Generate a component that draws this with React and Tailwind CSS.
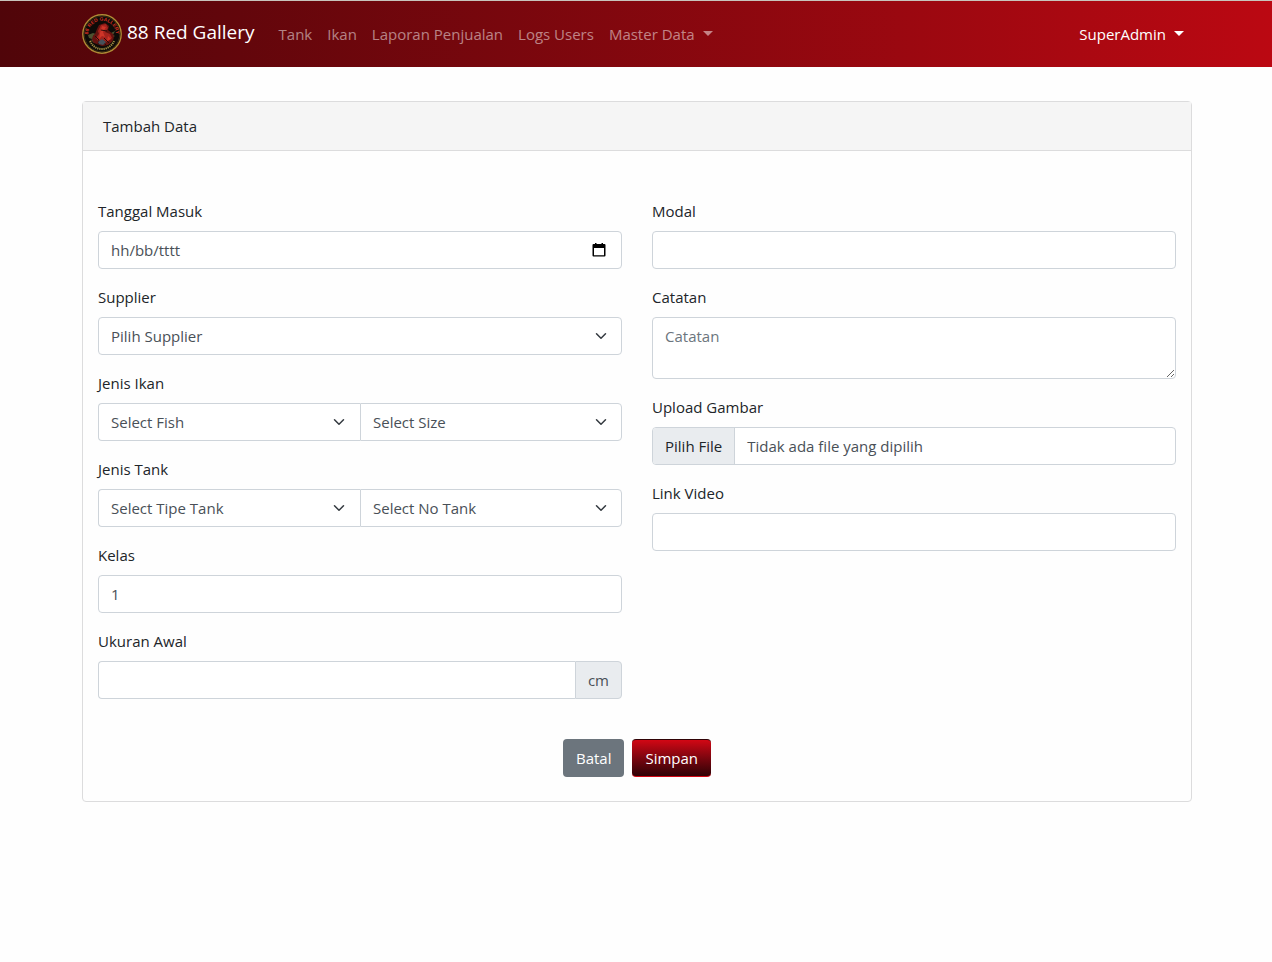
import React from "react";

const field =
  "block h-[38px] w-full min-w-0 rounded border border-[#ced4da] bg-white px-3 text-[15px] leading-6 text-[#495057] placeholder:text-[#495057] outline-none focus:border-[#86b7fe]";

function Logo() {
  return (
    <svg viewBox="0 0 40 40" className="size-10 shrink-0" aria-hidden="true">
      <defs>
        <path id="logo-top" d="M7 26a14 14 0 1 1 26 0" />
      </defs>
      <circle cx="20" cy="20" r="19.2" fill="#0d0b08" stroke="#b08a35" strokeWidth="1.4" />
      <circle cx="20" cy="20" r="17.8" fill="none" stroke="#4d3714" strokeWidth="0.7" />
      <text fill="#d02c20" fontSize="5" fontWeight="700" fontFamily="Liberation Sans, sans-serif">
        <textPath href="#logo-top" startOffset="50%" textAnchor="middle">88 RED GALLERY</textPath>
      </text>
      <path d="M6 21l5-2 3 1-3 2 3 2-4 1-3-1zM27 20l6-3-2 4 2 1-5 3zM9 26l4-2 2 3-3 2z" fill="#4d5130" />
      <path d="M12 29c-3-3-2-7 1-9l2-5 2-4 6-2 4 3-1 4 5 4c2 4 0 8-5 11l-6 1z" fill="#64120f" />
      <path d="M16 17l3-6 5-1 2 4-3 4 5 2 2 4-5 4-4-2-4 2-3-4 3-4z" fill="#a5231d" />
      <path d="M20 12l4 1-3 5 2 5-3-1-3 3 1-6zM26 22l3 3-4 2z" fill="#cf3528" />
      <path d="M13 22l4 4-1 4 5-2 3 3M19 16l6 1M22 24l5 5" fill="none" stroke="#260b0a" strokeWidth="1" />
      <path d="M16 28l4-3 4 3-3 3-4-1z" fill="#46505a" />
      <path d="M8 27c3 6 7 8 12 8s10-3 12-8" fill="none" stroke="#a99446" strokeWidth="2" strokeDasharray="1.2 0.9" />
    </svg>
  );
}

function Caret() {
  return (
    <svg viewBox="0 0 10 5" className="mb-0.5 h-[5px] w-[10px]" fill="currentColor" aria-hidden="true">
      <path d="M0 0h10L5 5z" />
    </svg>
  );
}

function Field({ label, id, children }) {
  return (
    <div>
      <label htmlFor={id} className="mb-2 block">{label}</label>
      {children}
    </div>
  );
}

function Select({ id, text, label, shape = "" }) {
  return (
    <div className="relative min-w-0 flex-1">
      <select id={id} aria-label={label} className={`${field} appearance-none pr-9 ${shape}`}>
        <option>{text}</option>
      </select>
      <svg
        viewBox="0 0 16 16"
        className="pointer-events-none absolute top-[13px] right-[15px] size-3"
        fill="none"
        stroke="#343a40"
        strokeWidth="2"
        strokeLinecap="round"
        strokeLinejoin="round"
        aria-hidden="true"
      >
        <path d="M2 5l6 6 6-6" />
      </svg>
    </div>
  );
}

export default function App() {
  return (
    <div className="min-h-screen bg-[#fefefe] font-['Open_Sans','Noto_Sans',sans-serif] text-[15px] leading-6 text-[#212529]">
      <header className="border-t border-[#c8c4bc] bg-linear-to-r from-[#500509] to-[#bb0812]">
        <nav className="mx-auto flex h-[66px] max-w-[1140px] items-center pr-[14px] pl-4">
          <a href="#" className="flex items-center gap-[5px] text-white">
            <Logo />
            <span className="pb-1 text-[19px] leading-7">88 Red Gallery</span>
          </a>
          <div className="ml-6 flex items-center gap-[15px] text-white/50">
            <a href="#">Tank</a>
            <a href="#">Ikan</a>
            <a href="#">Laporan Penjualan</a>
            <a href="#">Logs Users</a>
            <button type="button" className="flex items-center gap-2">Master Data <Caret /></button>
          </div>
          <button type="button" className="mr-2 ml-auto flex items-center gap-2 text-white">
            SuperAdmin <Caret />
          </button>
        </nav>
      </header>

      <main className="mx-auto max-w-[1140px] pt-[34px] pr-[14px] pb-8 pl-4">
        <section className="rounded border border-[#dcdcdd]">
          <h1 className="border-b border-[#dcdcdd] bg-[#f5f5f5] px-5 py-3">Tambah Data</h1>
          <form className="px-[15px] pt-12 pb-6" onSubmit={(e) => e.preventDefault()}>
            <div className="grid grid-cols-2 gap-[30px]">
              <div className="flex flex-col gap-4">
                <Field label="Tanggal Masuk" id="tanggal">
                  <div className="relative">
                    <input id="tanggal" type="text" placeholder="hh/bb/tttt" className={field} />
                    <button type="button" aria-label="Tanggal" className="absolute top-3 right-[15px]">
                      <svg viewBox="0 0 16 16" className="size-4" aria-hidden="true">
                        <path d="M4 0h1.500v1h5V0H12v1h1.500q1 0 1 1V12.500q0 1-1 1h-11q-1 0-1-1V2q0-1 1-1H4zM3 5v7.200h10V5z" fill="#000" fillRule="evenodd" />
                      </svg>
                    </button>
                  </div>
                </Field>
                <Field label="Supplier" id="supplier">
                  <Select id="supplier" text="Pilih Supplier" />
                </Field>
                <Field label="Jenis Ikan" id="ikan">
                  <div className="flex">
                    <Select id="ikan" text="Select Fish" shape="rounded-r-none border-r-0" />
                    <Select text="Select Size" label="Ukuran" shape="rounded-l-none" />
                  </div>
                </Field>
                <Field label="Jenis Tank" id="tank">
                  <div className="flex">
                    <Select id="tank" text="Select Tipe Tank" shape="rounded-r-none border-r-0" />
                    <Select text="Select No Tank" label="No Tank" shape="rounded-l-none" />
                  </div>
                </Field>
                <Field label="Kelas" id="kelas">
                  <input id="kelas" type="text" defaultValue="1" className={field} />
                </Field>
                <Field label="Ukuran Awal" id="ukuran">
                  <div className="flex">
                    <input id="ukuran" type="text" className={`${field} rounded-r-none border-r-0`} />
                    <span className="flex items-center rounded-r border border-[#ced4da] bg-[#e9ecef] px-3 text-[#495057]">cm</span>
                  </div>
                </Field>
              </div>

              <div className="flex flex-col gap-4">
                <Field label="Modal" id="modal">
                  <input id="modal" type="text" className={field} />
                </Field>
                <Field label="Catatan" id="catatan">
                  <textarea
                    id="catatan"
                    rows={2}
                    placeholder="Catatan"
                    className="block w-full resize-y rounded border border-[#ced4da] bg-white px-3 py-1.5 text-[#495057] outline-none placeholder:text-[#6c757d]"
                  />
                </Field>
                <Field label="Upload Gambar" id="gambar">
                  <label htmlFor="gambar" className="relative flex h-[38px] overflow-hidden rounded border border-[#ced4da] bg-white">
                    <input id="gambar" type="file" className="sr-only" />
                    <span className="flex items-center border-r border-[#ced4da] bg-[#e9ecef] px-3">Pilih File</span>
                    <span className="flex items-center px-3 text-[#495057]">Tidak ada file yang dipilih</span>
                  </label>
                </Field>
                <Field label="Link Video" id="video">
                  <input id="video" type="text" className={field} />
                </Field>
              </div>
            </div>

            <div className="mt-10 flex justify-center gap-2 text-white">
              <button type="button" className="h-[38px] rounded bg-[#6c757d] px-[13px]">Batal</button>
              <button type="submit" className="h-[38px] rounded border-y border-t-[#300206] border-b-[#d20714] bg-linear-to-b from-[#d20714] to-[#300206] px-[13px]">Simpan</button>
            </div>
          </form>
        </section>
      </main>
    </div>
  );
}
